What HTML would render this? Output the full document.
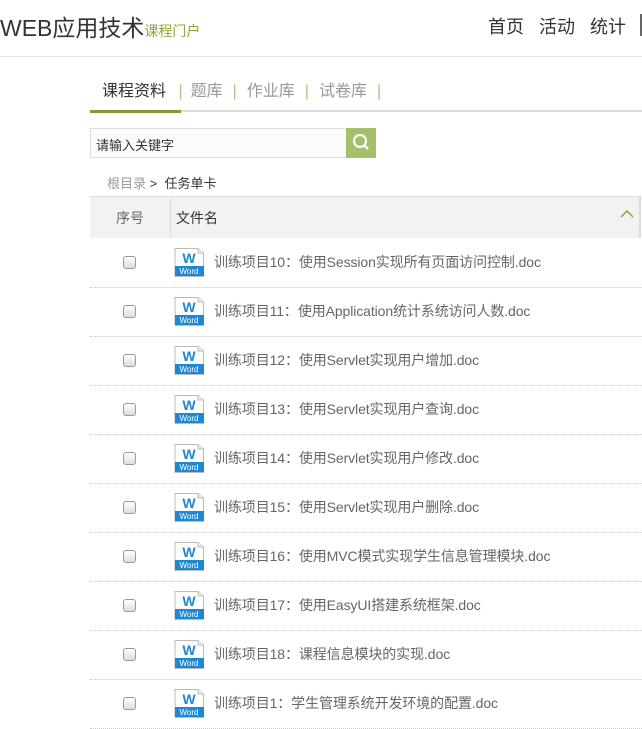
<!DOCTYPE html>
<html><head><meta charset="utf-8"><style>
body{margin:0;width:642px;height:707px;overflow:hidden;background:#fff;font-family:"Liberation Sans","Noto Sans CJK SC",sans-serif;position:relative}
.a{position:absolute;white-space:nowrap}
.row{position:absolute;left:90px;width:552px;height:49px;border-bottom:1px dotted #ccc}
.cb{position:absolute;left:33px;top:18px;width:11px;height:11px;border:1px solid #999;border-radius:3px;background:linear-gradient(#fff,#ddd)}
.ic{position:absolute;left:84px;top:10px;width:30px;height:29px}
.tx{position:absolute;left:124px;top:14px;font-size:14px;color:#666;letter-spacing:-0.1px}
</style></head><body>
<div class="a" style="left:0;top:9px;font-size:23px;color:#333">WEB应用技术<span style="font-size:14px;color:#8aa832">课程门户</span></div>
<div class="a" style="left:488px;top:13px;font-size:18px;color:#333">首页&nbsp;&nbsp;&nbsp;活动&nbsp;&nbsp;&nbsp;统计</div>
<div class="a" style="left:640px;top:14px;width:2px;height:22px;background:#666"></div>
<div class="a" style="left:0;top:56px;width:642px;height:1px;background:#e2e2e2"></div>
<div class="a" style="left:102px;top:77px;font-size:16px;color:#333">课程资料 <span style="color:#c9b27a;margin:0 8px">|</span><span style="color:#999">题库</span><span style="color:#c9b27a;margin:0 10px">|</span><span style="color:#999">作业库</span><span style="color:#c9b27a;margin:0 10px">|</span><span style="color:#999">试卷库</span><span style="color:#c9b27a;margin:0 10px">|</span></div>
<div class="a" style="left:90px;top:110px;width:552px;height:2px;background:#ddd"></div>
<div class="a" style="left:90px;top:110px;width:91px;height:3px;background:#7a9e32"></div>
<div class="a" style="left:90px;top:128px;width:255px;height:28px;border:1px solid #ddd;background:#fcfcfc"></div>
<div class="a" style="left:96px;top:135px;font-size:13px;color:#333">请输入关键字</div>
<div class="a" style="left:346px;top:128px;width:30px;height:30px;background:#a5bf6b"><svg width="30" height="30"><circle cx="14" cy="13" r="6" stroke="#fff" stroke-width="2.2" fill="none"/><line x1="18" y1="17" x2="22" y2="21" stroke="#fff" stroke-width="2.5"/></svg></div>
<div class="a" style="left:107px;top:173px;font-size:13px;color:#999">根目录 <span style="color:#333">&gt;&nbsp; 任务单卡</span></div>
<div class="a" style="left:90px;top:196px;width:549px;height:41px;background:#f2f2f2;border-top:1px solid #ddd;border-right:2px solid #ddd"></div>
<div class="a" style="left:170px;top:197px;width:1px;height:41px;background:#ddd"></div>
<div class="a" style="left:116px;top:208px;font-size:14px;color:#666">序号</div>
<div class="a" style="left:176px;top:208px;font-size:14px;color:#333">文件名</div>
<svg class="a" style="left:620px;top:210px" width="14" height="8"><polyline points="1,7 7,1 13,7" stroke="#8aa832" stroke-width="1.5" fill="none"/></svg>
<div id="rows"></div>
<script>
var n=["训练项目10：使用Session实现所有页面访问控制.doc","训练项目11：使用Application统计系统访问人数.doc","训练项目12：使用Servlet实现用户增加.doc","训练项目13：使用Servlet实现用户查询.doc","训练项目14：使用Servlet实现用户修改.doc","训练项目15：使用Servlet实现用户删除.doc","训练项目16：使用MVC模式实现学生信息管理模块.doc","训练项目17：使用EasyUI搭建系统框架.doc","训练项目18：课程信息模块的实现.doc","训练项目1：学生管理系统开发环境的配置.doc"];
var ic='<svg class="ic" viewBox="0 0 30 29"><path d="M1 .5H24L29.5 5V28.5H1Z" fill="#fff" stroke="#bbb"/><path d="M24 .5V5H29.5" fill="#eee" stroke="#bbb"/><text x="15" y="15" font-family="Liberation Sans" font-weight="bold" font-size="14" fill="#1e88d2" text-anchor="middle">W</text><rect x="1" y="18" width="29" height="10" fill="#1e88d2"/><text x="15" y="26" font-family="Liberation Sans" font-size="8" fill="#fff" text-anchor="middle">Word</text></svg>';
var h='';for(var i=0;i<n.length;i++){h+='<div class="row" style="top:'+(238+i*49)+'px"><div class="cb"></div>'+ic+'<div class="tx">'+n[i]+'</div></div>';}
document.getElementById('rows').innerHTML=h;
</script>
</body></html>
